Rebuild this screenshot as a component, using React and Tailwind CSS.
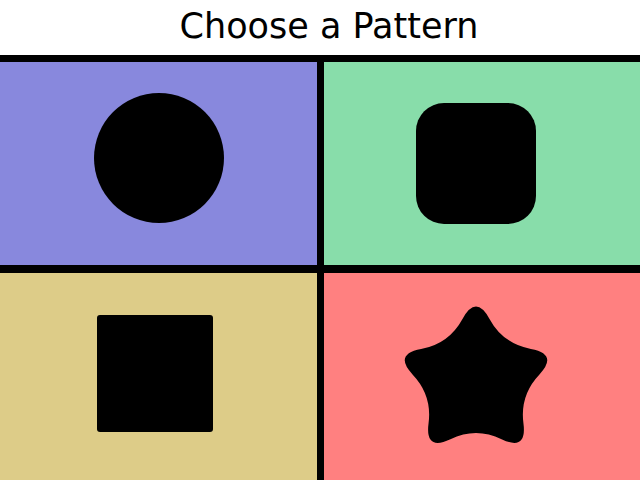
const starPath = (() => {
  const R = 87;
  const r = 46;
  const c = 75;
  const pts = [];
  for (let i = 0; i < 10; i++) {
    const a = (Math.PI / 5) * i;
    const rad = i % 2 === 0 ? R : r;
    pts.push([c + rad * Math.sin(a), c - rad * Math.cos(a)]);
  }
  const mid = (p, q) => [(p[0] + q[0]) / 2, (p[1] + q[1]) / 2];
  const f = (n) => n.toFixed(2);
  const start = mid(pts[9], pts[0]);
  let d = `M${f(start[0])} ${f(start[1])}`;
  for (let i = 0; i < 10; i++) {
    const v = pts[i];
    const m = mid(v, pts[(i + 1) % 10]);
    d += ` Q${f(v[0])} ${f(v[1])} ${f(m[0])} ${f(m[1])}`;
  }
  return d + ' Z';
})();

export default function App() {
  return (
    <div className="h-screen w-full flex flex-col bg-white" style={{ fontFamily: '"DejaVu Sans", sans-serif' }}>
      <div className="h-[55px] shrink-0 flex items-center justify-center pl-[18px] pb-[3px]">
        <h1 className="text-[35px] leading-none text-black">Choose a Pattern</h1>
      </div>
      <div className="flex-1 grid grid-cols-2 grid-rows-[203px_1fr] gap-x-[7px] gap-y-[8px] pt-[7px] bg-black">
        <div className="bg-[#8888dd] flex items-center justify-center">
          <div className="w-[130px] h-[130px] rounded-full bg-black ml-[2px] mb-[12px]" />
        </div>
        <div className="bg-[#88ddaa] flex items-center justify-center">
          <div className="w-[120px] h-[121px] rounded-[28px] bg-black mr-[11px]" />
        </div>
        <div className="bg-[#ddcc88] flex items-center justify-center">
          <div className="w-[116px] h-[117px] rounded-[3px] bg-black mr-[7px] mb-[6px]" />
        </div>
        <div className="bg-[#ff8080] flex items-center justify-center">
          <svg width="150" height="150" viewBox="0 0 150 150" className="mr-[11px] mt-[8px]">
            <path d={starPath} fill="black" />
          </svg>
        </div>
      </div>
    </div>
  );
}
